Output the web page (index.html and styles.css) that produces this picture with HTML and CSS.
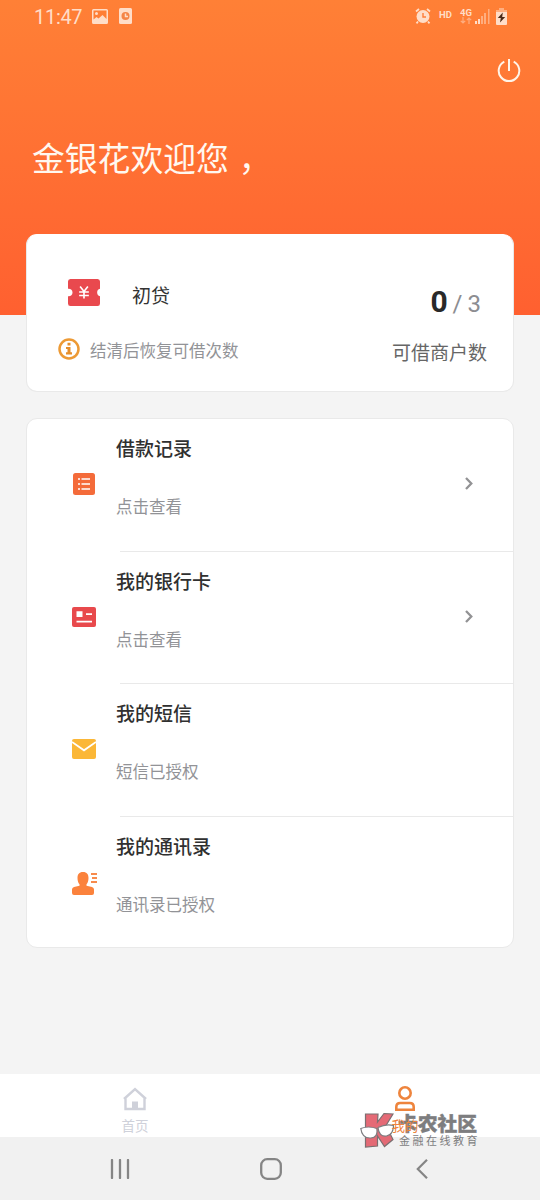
FILE: index.html
```html
<!DOCTYPE html>
<html lang="zh-CN">
<head>
<meta charset="utf-8">
<title>我的</title>
<link rel="stylesheet" href="styles.css">
</head>
<body>
<div class="screen">
  <header class="status">
    <span class="time">11:47</span>
    <svg class="s-photo" width="16" height="15" viewBox="0 0 16 15"><path fill="currentColor" fill-rule="evenodd" d="M1.500 0h13Q16 0 16 1.500v12Q16 15 14.500 15h-13Q0 15 0 13.500v-12Q0 0 1.500 0ZM1.500 1.500v9l3-2.500 2 1.500 4-3.500 4 4V1.500ZM4.500 3a1.500 1.500 0 1 1 0 3 1.500 1.500 0 0 1 0-3Z"/></svg>
    <svg class="s-app" width="13" height="16" viewBox="0 0 13 16"><rect width="13" height="16" rx="1.500" fill="currentColor"/><circle cx="6.500" cy="8" r="4" fill="#f58446"/><path d="M6.500 5.500v3h2.500" fill="none" stroke="currentColor" stroke-width="1.500"/></svg>
    <span class="grow"></span>
    <svg class="s-alarm" width="16" height="16" viewBox="0 0 16 16"><circle cx="8" cy="8.500" r="6.500" fill="currentColor"/><path d="M1 3.500 4 1M12 1l3 2.500M3 13.500 1.500 15.300M13 13.500l1.500 1.800" stroke="currentColor" stroke-width="1.800"/><path d="M8 5v4h3" fill="none" stroke="#ff7d38" stroke-width="1.400"/></svg>
    <span class="hd">HD</span>
    <span class="net"><b>4G</b><svg width="12" height="7" viewBox="0 0 12 7"><path d="M3 0v6M.8 3.800 3 6l2.200-2.200M9 7V1M6.800 3.200 9 1l2.200 2.200" fill="none" stroke="currentColor" stroke-width="1.200"/></svg></span>
    <svg class="s-signal" width="15" height="15" viewBox="0 0 15 15"><path fill="currentColor" d="M0 12h2v3H0ZM3 10h2v5H3Z"/><path fill="currentColor" opacity=".5" d="M6 7h2v8H6ZM9 4h2v11H9ZM13 0h1.500v15H13Z"/></svg>
    <svg class="s-batt" width="11" height="17" viewBox="0 0 11 17"><path fill="currentColor" d="M0 4h11v12q0 1-1 1H1q-1 0-1-1Z"/><path fill="currentColor" opacity=".5" d="M3 0h5v2h3v2H0V2h3Z"/><path fill="#4b2a18" d="M6.800 4.500 1.800 10h3L4 14.500 9.200 9h-3Z"/></svg>
  </header>
  <div class="toolbar">
    <svg width="24" height="24" viewBox="0 0 24 24" fill="none" stroke="#fff4e8" stroke-width="2"><path d="M7.300 2.600a10.300 10.300 0 1 0 9.400 0M12 0v12"/></svg>
  </div>
  <h1 class="welcome">金银花欢迎您<span class="comma">，</span></h1>

  <section class="card summary">
    <div class="left">
      <div class="level">
        <svg width="32" height="27" viewBox="0 0 33 27" preserveAspectRatio="none"><path fill="#e9494e" d="M2.500 0h28Q33 0 33 2.500v7.300a3.800 3.800 0 0 0 0 7.400v7.300q0 2.500-2.500 2.500h-28Q0 27 0 24.500v-7.300a3.800 3.800 0 1 0 0-7.400V2.500Q0 0 2.500 0Z"/><path d="m12.500 7.500 4 5 4-5M16.500 12.500v7M11.500 13h10M11.500 16.500h10" fill="none" stroke="#fff" stroke-width="1.700"/></svg>
        <span>初贷</span>
      </div>
      <div class="hint">
        <svg width="22" height="22" viewBox="0 0 22 22"><circle cx="11" cy="11" r="9.500" fill="none" stroke="#ed9a35" stroke-width="2.500"/><path d="M9.500 4.800h3v2.800h-3ZM8 9h4.500v5.300H14V16.500H8v-2.200h1.500v-3.200H8Z" fill="#e58e2b"/></svg>
        <span>结清后恢复可借次数</span>
      </div>
    </div>
    <div class="right">
      <div class="count"><b>0</b><span class="slash">/</span><span>3</span></div>
      <div class="caption">可借商户数</div>
    </div>
  </section>

  <section class="card menu">
    <div class="row">
      <div class="icon"><svg width="22" height="22" viewBox="0 0 22 22"><rect width="22" height="22" rx="2.500" fill="#f46b3a"/><path d="M5 6h2M5 11h2M5 16h2M8.500 6H17M8.500 11H17M8.500 16H17" stroke="#fff" stroke-width="1.600"/></svg></div>
      <div class="body"><h2>借款记录</h2><p>点击查看</p>
        <svg class="arrow" width="8" height="13" viewBox="0 0 8 13"><path d="m1 1 5.300 5.500L1 12" fill="none" stroke="#929294" stroke-width="2.300"/></svg></div>
    </div>
    <div class="row">
      <div class="icon"><svg width="24" height="20" viewBox="0 0 24 20"><rect width="24" height="20" rx="2" fill="#e8494c"/><path fill="#fff" d="M4.500 4.200h6v5.800h-6ZM14 6.300h6V8h-6ZM4.500 13.800H20v1.700H4.500Z"/></svg></div>
      <div class="body"><h2>我的银行卡</h2><p>点击查看</p>
        <svg class="arrow" width="8" height="13" viewBox="0 0 8 13"><path d="m1 1 5.300 5.500L1 12" fill="none" stroke="#929294" stroke-width="2.300"/></svg></div>
    </div>
    <div class="row">
      <div class="icon"><svg width="24" height="20" viewBox="0 0 24 20"><rect width="24" height="20" rx="2" fill="#fbb737"/><path d="m0 3 12 8.300L24 3" fill="none" stroke="#fff" stroke-width="1.800"/></svg></div>
      <div class="body"><h2>我的短信</h2><p>短信已授权</p></div>
    </div>
    <div class="row">
      <div class="icon person"><svg width="26" height="23" viewBox="0 0 26 23"><path fill="#fb823c" d="M11 0c4 0 5.500 2.500 5.500 6 0 3-.8 5-2 6.300v1.500l5.500 1.200q2 .6 2 2.600v3.400q0 2-2 2H2q-2 0-2-2v-3.400q0-2 2-2.600l5.500-1.200v-1.500C6.300 11 5.500 9 5.500 6 5.500 2.500 7 0 11 0Z"/><path d="M19 2h6M20 6h5M19 10h6" stroke="#f78b4c" stroke-width="1.900"/></svg></div>
      <div class="body"><h2>我的通讯录</h2><p>通讯录已授权</p></div>
    </div>
  </section>

  <footer class="bottom">
    <nav class="tabs">
      <div class="tab">
        <svg width="24" height="24" viewBox="0 0 24 24"><path d="M2.500 10.500V22h19V10.500M1 12 12 2l11 10" fill="none" stroke="#cfd1da" stroke-width="2.400"/><path d="M9 14.500h6V22H9Z" fill="#cfd1da"/></svg>
        <span>首页</span>
      </div>
      <div class="tab active">
        <svg width="24" height="26" viewBox="0 0 24 26" fill="none" stroke="#ee843d" stroke-width="2.600"><circle cx="12" cy="7" r="5.700"/><path d="M3.300 23.700v-2.700q0-4 4-4h9.400q4 0 4 4v2.700Z"/></svg>
        <span>我的</span>
      </div>
      <div class="watermark">
        <svg width="34" height="36" viewBox="0 0 34 36"><path d="M5.500 2h12.500l-.5 8L24 1.500l9 .5-7 11.500 7 14-8.500 7L17.500 24v10L5.500 35Z" fill="#e4636f" stroke="#76686a" stroke-width="1.200"/><path d="M.8 16.500q7.500-3 16 0 1.500 9-6 9.500Q2 26.500.8 16.500ZM18 15.500q8-4 15.500-2 0 9-7 10.500-7.500 1-8.500-8.500Z" fill="#fff" stroke="#77777a" stroke-width="1.200"/></svg>
        <div class="wm-text"><b>卡农社区</b><span>金融在线教育</span></div>
      </div>
    </nav>
    <div class="system">
      <svg width="20" height="20" viewBox="0 0 20 20"><path d="M2 1v18M10 1v18M18 1v18" stroke="#858585" stroke-width="2.300" stroke-linecap="round"/></svg>
      <svg width="22" height="22" viewBox="0 0 22 22"><rect x="1.200" y="1.200" width="19.600" height="19.600" rx="6" fill="none" stroke="#858585" stroke-width="2.300"/></svg>
      <svg width="12" height="20" viewBox="0 0 12 20"><path d="m11 .8-9.200 9.200 9.200 9.200" fill="none" stroke="#858585" stroke-width="2.200"/></svg>
    </div>
  </footer>
</div>
</body>
</html>
```
FILE: styles.css
```css
* { box-sizing: border-box; }
body, h1, h2, p { margin: 0; }
body { font-family: Roboto, "Noto Sans CJK SC", sans-serif; }
svg { display: block; flex: none; }

.screen {
  width: 540px;
  height: 1200px;
  display: flex;
  flex-direction: column;
  background: linear-gradient(#ff8036, #ff6030) 0 0 / 100% 315px no-repeat #f4f4f4;
}

/* status bar */
.status {
  height: 32px;
  padding: 0 33px 0 34px;
  display: flex;
  align-items: center;
  color: #ffddc8;
}
.time { width: 48px; font-size: 20px; line-height: 32px; letter-spacing: -0.3px; padding-top: 1px; }
.s-photo { margin-left: 10px; }
.s-app { margin-left: 11px; }
.grow { flex: 1; }
.hd { margin-left: 8px; width: 14px; font-size: 9.500px; line-height: 14px; margin-bottom: 2px; font-weight: 700; }
.net { margin-left: 7px; width: 13px; display: flex; flex-direction: column; font-size: 9.500px; line-height: 9px; }
.net svg { opacity: .5; }
.s-signal { margin-left: 2px; }
.s-batt { margin-left: 6px; }

.toolbar { display: flex; justify-content: flex-end; padding: 27px 19px 0 0; }
.welcome {
  margin: 50px 0 0 32px;
  height: 49px;
  font: 400 32.800px/48px "Noto Sans CJK SC", sans-serif;
  color: #fff8f0;
  white-space: nowrap;
}
.comma { margin-left: 10px; }

/* cards */
.card {
  margin: 0 26px;
  background: #fff;
  border: 1px solid #e9e9e9;
  border-radius: 11px;
}
.summary {
  margin-top: 52px;
  height: 158px;
  border-top-color: #fff;
  display: flex;
  justify-content: space-between;
  padding: 0 26px 0 31px;
}
.level { display: flex; align-items: center; padding-left: 10px; margin-top: 43px; height: 28px; }
.level span { margin: 10px 0 0 32px; font-size: 19px; line-height: 28px; color: #333; }
.hint { display: flex; align-items: center; gap: 10px; margin-top: 31px; height: 24px; font-size: 16.500px; color: #929397; }
.hint span { margin-top: 2px; }
.right { display: flex; flex-direction: column; align-items: flex-end; }
.count { display: flex; align-items: baseline; margin-top: 49px; padding-right: 6px; height: 36px; line-height: 36px; font-size: 24px; color: #8c8d91; }
.count b { font-size: 30px; color: #292929; }
.slash { margin: 0 5px; }
.caption { margin-top: 20px; font-size: 19px; line-height: 28px; color: #666; }

.menu { margin-top: 26px; height: 530px; }
.row { height: 132.500px; display: flex; padding-left: 44px; }
.row:last-child { height: 131px; }
.icon { width: 26px; display: flex; justify-content: center; align-items: center; padding-bottom: 2px; }
.icon.person { padding: 3px 0 0 1px; justify-content: flex-start; }
.body {
  flex: 1;
  margin-left: 23px;
  display: grid;
  grid-template-columns: 1fr 48px;
  grid-template-rows: 28px 24px;
  row-gap: 32px;
  padding-top: 17px;
  background: linear-gradient(#e9e9e9, #e9e9e9) 0 100% / 100% 1px no-repeat;
  text-indent: -4px;
}
.row:last-child .body { background: none; }
.body h2 { grid-column: 1; font-size: 19px; line-height: 28px; font-weight: 500; color: #303030; }
.body p { grid-column: 1; font-size: 16.500px; line-height: 24px; color: #929397; }
.arrow { grid-column: 2; grid-row: 1 / 3; align-self: center; margin-top: 11px; }

/* bottom bars */
.bottom { margin-top: auto; }
.tabs { position: relative; height: 63px; display: flex; background: #fff; }
.tab {
  flex: 1;
  display: flex;
  flex-direction: column;
  align-items: center;
  padding-top: 12px;
  font-size: 13.500px;
  line-height: 18px;
  color: #cfd1da;
}
.tab svg { height: 26px; }
.tab span { margin-top: 5px; }
.tab.active { color: #ee843d; }
.tab.active span { position: relative; z-index: 2; }

.watermark {
  position: absolute;
  z-index: 1;
  left: 360px;
  top: 38px;
  display: flex;
  gap: 4px;
  color: #777779;
  opacity: .95;
}
.wm-text { display: flex; flex-direction: column; white-space: nowrap; }
.wm-text b { font-size: 19.800px; line-height: 26px; font-weight: 900; -webkit-text-stroke: .4px; }
.wm-text span { margin: -4px 0 0 1px; font-size: 11px; line-height: 15px; letter-spacing: 2.500px; }
.system {
  height: 63px;
  display: grid;
  grid-template-columns: 240px 62px 240px;
  align-items: center;
  justify-items: center;
  background: #f1f1f1;
}
```
